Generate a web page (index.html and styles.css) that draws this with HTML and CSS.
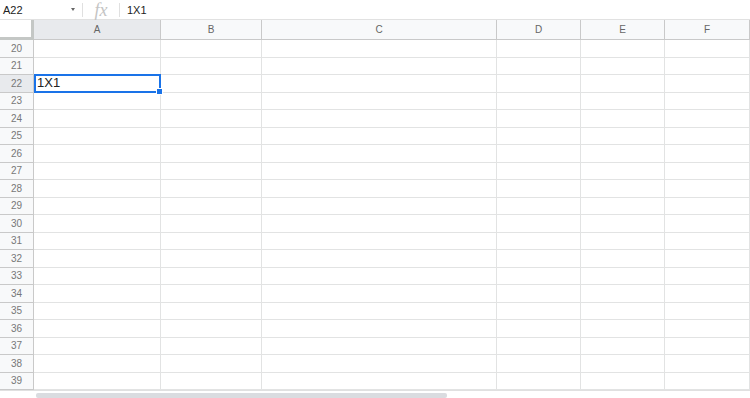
FILE: index.html
```html
<!DOCTYPE html>
<html lang="en">
<head>
  <meta charset="UTF-8">
  <meta name="viewport" content="width=device-width, initial-scale=1.0">
  <title>Sheet</title>
  <link rel="stylesheet" href="styles.css">
</head>
<body>
  <div class="formula-bar">
    <div class="name-box">A22</div>
    <span class="arrow"></span>
    <span class="sep"></span>
    <span class="fx">fx</span>
    <span class="sep"></span>
    <div class="formula">1X1</div>
  </div>

  <div class="sheet" id="sheet">
    <div class="corner"></div>
    <div class="col-head selected">A</div>
    <div class="col-head">B</div>
    <div class="col-head">C</div>
    <div class="col-head">D</div>
    <div class="col-head">E</div>
    <div class="col-head">F</div>
  </div>

  <div class="scroll">
    <div class="thumb"></div>
  </div>

  <script>
    var sheet = document.getElementById("sheet");
    var html = "";
    for (var r = 20; r <= 39; r++) {
      html += '<div class="row-head' + (r == 22 ? ' selected' : '') + '">' + r + '</div>';
      for (var c = 0; c < 6; c++) {
        if (r == 22 && c == 0) {
          html += '<div class="cell active">1X1<span class="handle"></span></div>';
        } else {
          html += '<div class="cell"></div>';
        }
      }
    }
    sheet.insertAdjacentHTML("beforeend", html);
  </script>
</body>
</html>
```

FILE: styles.css
```css
body {
  margin: 0;
  background: #fff;
  font-family: Arial, "Liberation Sans", sans-serif;
  overflow: hidden;
}

.formula-bar {
  display: flex;
  align-items: center;
  height: 19px;
  border-bottom: 1px solid #e1e1e1;
  font-size: 11px;
  color: #222;
}
.name-box {
  width: 68px;
  padding-left: 3px;
}
.arrow {
  width: 0;
  height: 0;
  border-left: 2px solid transparent;
  border-right: 2px solid transparent;
  border-top: 3px solid #666;
  margin-right: 7px;
}
.sep {
  width: 1px;
  height: 14px;
  background: #e0e0e0;
}
.fx {
  width: 36px;
  text-align: center;
  font-family: "Liberation Serif", serif;
  font-style: italic;
  font-size: 18px;
  line-height: 18px;
  color: #c4c4c4;
}
.formula {
  padding-left: 7px;
}

.sheet {
  display: grid;
  grid-template-columns: 34px 127px 101px 235px 84px 84px 85px;
  grid-template-rows: 20px repeat(20, 17.5px);
}

.corner {
  background: #fff;
  border-right: 3px solid #c4c7c5;
  border-bottom: 3px solid #c4c7c5;
}
.col-head {
  background: #f8f9fa;
  border-right: 1px solid #c9c9c9;
  border-bottom: 1px solid #c9c9c9;
  color: #666;
  font-size: 10px;
  display: flex;
  align-items: center;
  justify-content: center;
}
.col-head.selected,
.row-head.selected {
  background: #e8eaed;
}
.row-head {
  background: #f8f9fa;
  border-right: 1px solid #c9c9c9;
  border-bottom: 1px solid #c9c9c9;
  color: #777;
  font-size: 10px;
  display: flex;
  align-items: center;
  justify-content: center;
}
.cell {
  border-right: 1px solid #e2e3e3;
  border-bottom: 1px solid #e2e3e3;
}
.cell.active {
  position: relative;
  border: 2px solid #1a73e8;
  margin: -1px 0 0 0;
  font-size: 13px;
  color: #222;
  padding-left: 1px;
  line-height: 14px;
}
.handle {
  position: absolute;
  right: -4px;
  bottom: -4px;
  width: 5px;
  height: 5px;
  background: #1a73e8;
  border: 1px solid #fff;
}

.scroll {
  height: 7px;
  border-top: 1px solid #e0e0e0;
  padding-left: 36px;
  padding-top: 2px;
}
.thumb {
  width: 411px;
  height: 5px;
  background: #dadce0;
  border-radius: 2px;
}
```
